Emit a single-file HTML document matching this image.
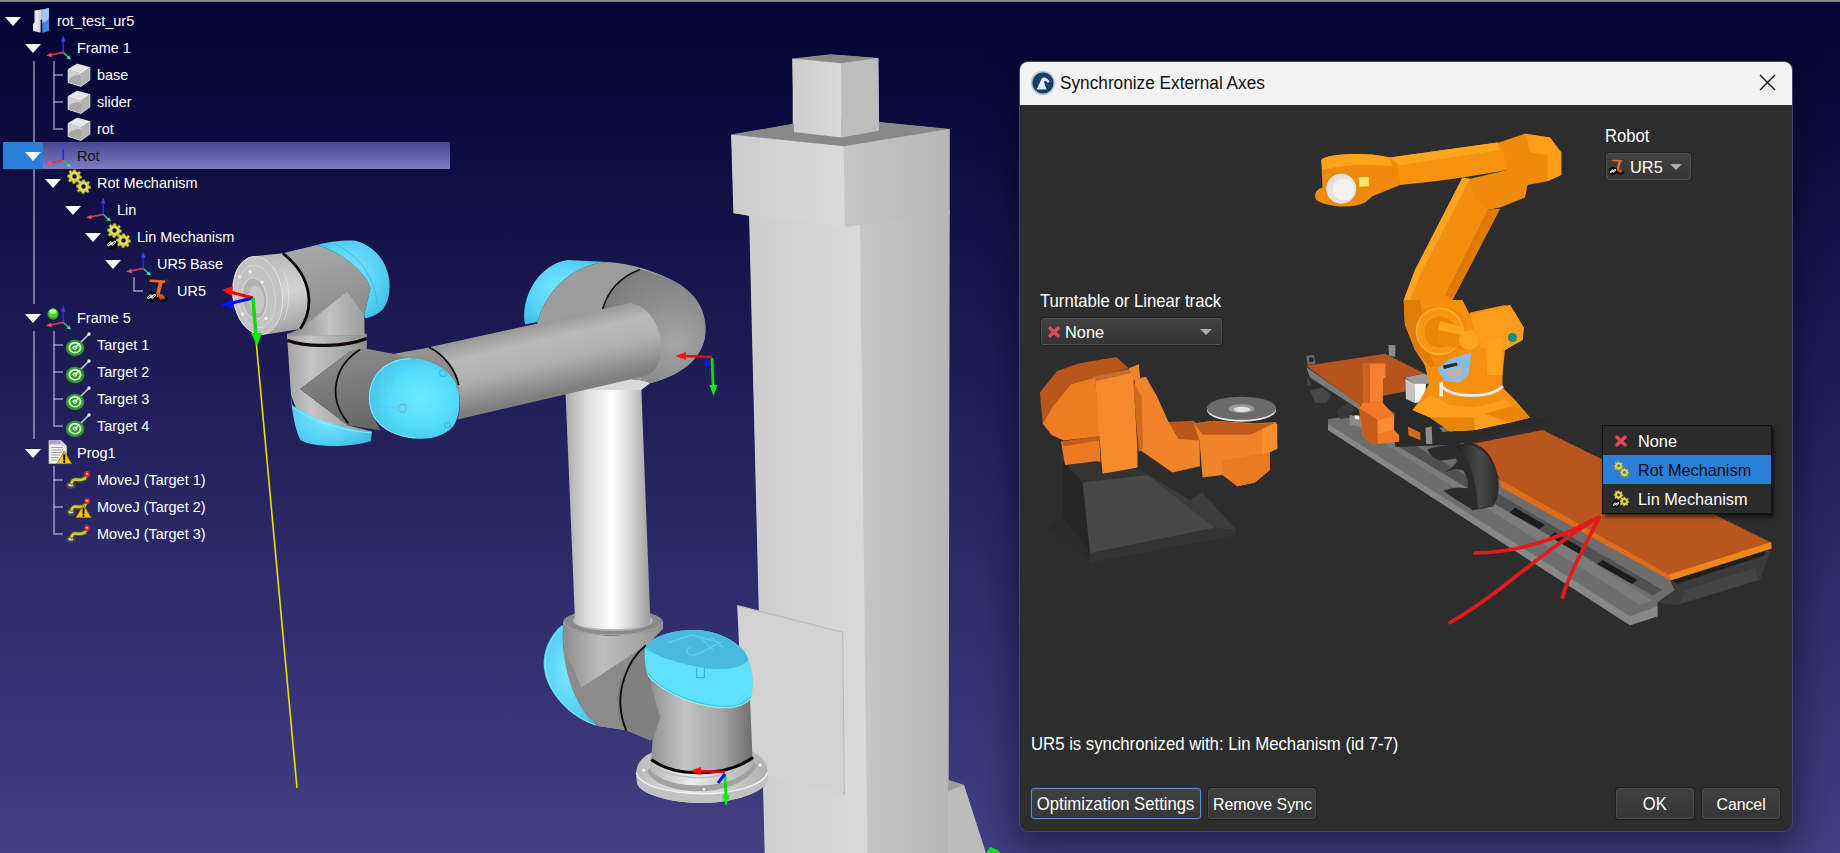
<!DOCTYPE html>
<html lang="en">
<head>
<meta charset="utf-8">
<title>Synchronize External Axes</title>
<style>
html,body{margin:0;padding:0;}
body{width:1840px;height:853px;overflow:hidden;position:relative;
  font-family:"Liberation Sans",sans-serif;
  background:linear-gradient(180deg,#020233 0px,#423f83 853px);}
#topline{position:absolute;left:0;top:0;width:1840px;height:2px;background:linear-gradient(180deg,#9a9a9a,#6a6a78);}
#scene{position:absolute;left:0;top:0;width:1840px;height:853px;}
/* tree */
#tree{position:absolute;left:0;top:0;width:460px;height:560px;color:#fff;font-size:15.4px;}
.row{position:absolute;height:27px;line-height:27px;white-space:nowrap;transform:scaleX(.94);transform-origin:0 50%;}
.t{display:inline-block;transform:scaleX(.943);transform-origin:0 50%;white-space:nowrap;}
.tc{display:inline-block;transform:scaleX(.943);transform-origin:50% 50%;white-space:nowrap;}
.row .lbl{position:absolute;top:0;text-shadow:0 0 1px rgba(255,255,255,.25);}
.tri{position:absolute;width:0;height:0;border-left:8px solid transparent;border-right:8px solid transparent;border-top:9.5px solid #fff;}
.ln{position:absolute;background:rgba(176,176,206,.62);}
#sel{position:absolute;left:3px;top:142px;width:447px;height:27px;background:linear-gradient(180deg,#47478d,#7d7dc6);}
#sel i{position:absolute;left:0;top:0;width:40px;height:27px;background:#2a80d9;}
.ico{position:absolute;}
/* dialog */
#dlgshadow{position:absolute;left:1020px;top:62px;width:772px;height:768px;border-radius:9px;box-shadow:0 14px 34px 6px rgba(0,0,20,.45);}
#dlg{position:absolute;left:1019px;top:61px;width:772px;height:769px;border:1px solid #47466c;border-radius:9px;background:#2d2d2d;overflow:hidden;color:#fff;font-size:16.8px;}
#ttl{position:absolute;left:0;top:0;width:772px;height:43px;background:#f3f3f3;color:#111;}
#ttl span{position:absolute;left:40px;top:0;line-height:42px;font-size:18px;transform:scaleX(.957);transform-origin:0 50%;white-space:nowrap;}
.abs{position:absolute;white-space:nowrap;}
.combo{position:absolute;height:27px;border:1px solid #4f4f4f;border-radius:3px;background:linear-gradient(180deg,#414141,#353535);box-shadow:0 0 0 1px #222;}
.btn{position:absolute;height:29px;line-height:31px;text-align:center;border:1px solid #4b4b4b;border-radius:3px;background:linear-gradient(180deg,#404040,#363636);box-shadow:0 0 0 1px #202020;}
#menu{position:absolute;left:1602px;top:425px;width:168px;height:87px;background:#2b2b2b;border:1px solid #111;box-shadow:2px 3px 4px rgba(0,0,0,.6);color:#fff;font-size:17.3px;}
#menu .it{position:absolute;left:0;width:168px;height:29px;line-height:31px;}
#menu .it span{position:absolute;left:35px;}
</style>
</head>
<body>
<svg id="scene" width="1840" height="853" viewBox="0 0 1840 853">
<defs>
<symbol id="i-frame" viewBox="0 0 26 26">
  <path d="M17.200 4 L17.200 17.400" stroke="#2424f0" stroke-width="1.700" fill="none"/>
  <path d="M17.200 .6 L19.300 6.600 L15.100 6.600 Z" fill="#4040ff"/>
  <path d="M17.200 17.400 L4 20" stroke="#e03646" stroke-width="1.600" fill="none"/>
  <path d="M.3 20.600 L5.400 17.800 L5.800 22.200 Z" fill="#ee5064"/>
  <path d="M17.200 17.400 L22.600 22.400" stroke="#30b080" stroke-width="1.600" fill="none"/>
  <path d="M25 24.400 L20.200 23.500 L23.300 20.200 Z" fill="#48d898"/>
</symbol>
<symbol id="i-cube" viewBox="0 0 24 24">
  <path d="M1 6.5 L10 1 L23 4.5 L23 17 L14 23.5 L1 19.5 Z" fill="#8a8a8a"/>
  <path d="M1 6.5 L10 1 L23 4.5 L14 10.5 Z" fill="#e6e6e6"/>
  <path d="M1 6.5 L14 10.5 L14 23.5 L1 19.5 Z" fill="#d0d0d0"/>
  <path d="M1 19.5 C2 14 7 11.5 14 12.5 L14 23.5 Z" fill="#a8a8a8"/>
  <path d="M14 10.5 L23 4.5 L23 17 L14 23.5 Z" fill="#b4b4b4"/>
  <path d="M1 6.5 L10 1 L23 4.5 L23 17 L14 23.5 L1 19.5 Z" fill="none" stroke="#f4f4f4" stroke-width=".8" stroke-linejoin="round" opacity=".7"/>
</symbol>
<symbol id="i-gear" viewBox="-10 -10 20 20">
  <path fill-rule="evenodd" fill="#d9d24a" stroke="#7d7712" stroke-width=".9" d="M-1.800 -9 L1.800 -9 L2.300 -6.600 L4.300 -5.800 L6.400 -7.200 L8.300 -5 L6.800 -3 L7.400 -1 L9.600 -.6 L9.600 2.400 L7.200 2.800 L6.300 4.700 L7.600 6.800 L5.200 8.600 L3.400 7 L1.400 7.500 L.8 9.800 L-2.200 9.600 L-2.600 7.200 L-4.600 6.400 L-6.600 7.800 L-8.600 5.400 L-7 3.600 L-7.600 1.600 L-9.800 1 L-9.600 -2 L-7.200 -2.500 L-6.300 -4.400 L-7.600 -6.500 L-5.200 -8.400 L-3.400 -6.800 L-2.200 -7 Z M0 -2.900 A2.900 2.900 0 1 0 0.010 -2.900 Z"/>
  <circle r="4.600" fill="none" stroke="#f0eb9a" stroke-width="1.200" opacity=".7"/>
</symbol>
<symbol id="i-gears" viewBox="0 0 26 26">
  <use href="#i-gear" x="1" y="0" width="15" height="15"/>
  <use href="#i-gear" x="10" y="10" width="15" height="15"/>
</symbol>
<symbol id="i-link" viewBox="0 0 10 10">
  <circle cx="5" cy="5" r="5" fill="#0a0a0a"/>
  <path d="M2.2 6.2 L4.2 4.2 M5.8 5.8 L7.8 3.8" stroke="#fff" stroke-width="2.4" stroke-linecap="round" fill="none"/>
  <path d="M2.2 6.2 L4.2 4.2 M5.8 5.8 L7.8 3.8" stroke="#0a0a0a" stroke-width=".8" stroke-linecap="round" fill="none"/>
  <path d="M3.8 6.2 L6.2 3.8" stroke="#fff" stroke-width=".9"/>
</symbol>
<symbol id="i-robot" viewBox="0 0 26 26">
  <ellipse cx="16" cy="22" rx="6" ry="3.200" fill="#141414"/>
  <path d="M12.500 19.500 L17.500 18.500 L19.500 21.500 L14 22.500 Z" fill="#b8501c"/>
  <path d="M3.600 2.400 L21.600 3.600 L21.800 6.200 L3.400 5 Z" fill="#e06c28"/>
  <path d="M13 4.500 L17 4.800 L13.400 18.500 L9.800 17.500 Z" fill="#e06c28"/>
  <path d="M10 16 L17 17.500 L17.500 20.500 L11 20 Z" fill="#c85a1e"/>
  <path d="M19 2 L22.500 2.400 L22.500 7 L19 6.500 Z" fill="#3a2a20"/>
</symbol>
<symbol id="i-ball" viewBox="0 0 12 12">
  <circle cx="6" cy="6" r="5.700" fill="#2f9e20"/>
  <circle cx="6" cy="5.200" r="4.600" fill="#4fd038"/>
  <ellipse cx="5.800" cy="3.600" rx="3.200" ry="2.400" fill="#c6f8b0" opacity=".9"/>
</symbol>
<symbol id="i-target" viewBox="0 0 26 26">
  <path d="M11 16 L23.5 3.5" stroke="#c8c8c8" stroke-width="1.6" stroke-linecap="round"/>
  <circle cx="24" cy="3" r="1.7" fill="#eee"/>
  <ellipse cx="10" cy="17" rx="9.3" ry="8.3" fill="#2e9a2e"/>
  <ellipse cx="10" cy="16.6" rx="6.6" ry="5.8" fill="#d6f2cc"/>
  <ellipse cx="10" cy="16.8" rx="4.6" ry="4" fill="#2e9a2e"/>
  <ellipse cx="10" cy="16.6" rx="2.5" ry="2.1" fill="#e4f8dc"/>
  <ellipse cx="10.2" cy="16.7" rx="1.1" ry="1" fill="#2e9a2e"/>
  <path d="M10.6 16.2 L14 12.8" stroke="#e8e8e8" stroke-width="1.4" stroke-linecap="round"/>
</symbol>
<symbol id="i-warn" viewBox="0 0 16 14">
  <path d="M8 .8 L15.3 13.2 L.7 13.2 Z" fill="#f6c21a" stroke="#a87a00" stroke-width=".9" stroke-linejoin="round"/>
  <path d="M8 4.4 L8 9.2" stroke="#111" stroke-width="1.9" stroke-linecap="round"/>
  <circle cx="8" cy="11.4" r="1.05" fill="#111"/>
</symbol>
<symbol id="i-prog" viewBox="0 0 26 26">
  <path d="M2 1.5 L14 1.5 L19.5 7 L19.5 24.5 L2 24.5 Z" fill="#f4f4f4" stroke="#bdbdbd" stroke-width=".8"/>
  <path d="M14 1.5 L14 7 L19.5 7 Z" fill="#d2d2d2"/>
  <rect x="2.6" y="2" width="11" height="3.4" fill="#b49ad6"/>
  <path d="M4 8.5 H16 M4 11 H16 M4 13.5 H15 M4 16 H13 M4 18.5 H11 M4 21 H10" stroke="#9a9a9a" stroke-width=".9"/>
  <use href="#i-warn" x="9" y="11.5" width="16.5" height="14"/>
</symbol>
<symbol id="i-move" viewBox="0 0 26 26">
  <ellipse cx="4.800" cy="19.300" rx="4.500" ry="3.500" fill="#4c4c4c"/>
  <ellipse cx="4.800" cy="18.900" rx="2.500" ry="1.700" fill="#d4d4d4"/>
  <path d="M5.600 16.700 C6.500 13.800 8.200 13.200 10.500 13.600 C13 14.200 15.500 14 18 12.800" stroke="#5e5a0c" stroke-width="4.200" fill="none" stroke-linecap="round"/>
  <path d="M22 10 L16.600 10.800 L19.400 15 Z" fill="#c9c32c" stroke="#5e5a0c" stroke-width=".9" stroke-linejoin="round"/>
  <path d="M5.600 16.700 C6.500 13.800 8.200 13.200 10.500 13.600 C13 14.200 15.500 14 18 12.800" stroke="#cfc930" stroke-width="2.600" fill="none" stroke-linecap="round"/>
  <circle cx="21.100" cy="8" r="2.900" fill="#d42a3c"/>
  <circle cx="20.900" cy="7.700" r="1" fill="#f6c8cc"/>
</symbol>
<symbol id="i-file" viewBox="0 0 22 27">
  <path d="M3.5 3.5 L11 2.5 L11 12 L9.5 13 L9.5 25.5 L2 24 L2 17 L3.5 15.5 Z" fill="#e8e8e8"/>
  <path d="M3.5 3.5 L11 2.5 L11 12 L9.5 13 L9.5 25.5 L7 25 L7 4 Z" fill="#cfcfcf" opacity=".6"/>
  <path d="M10.5 2.8 L18 1 L18 24 L11.2 26 L11.2 13 L10.5 12 Z" fill="#3f86e0"/>
  <path d="M10.5 2.8 L18 1 L18 11 C15 15 13 15.5 11.2 15.5 L11.2 13 L10.5 12 Z" fill="#9cc8f0"/>
</symbol>
<symbol id="i-x" viewBox="0 0 14 14">
  <path d="M3 3.200 L11 10.800 M11 3.200 L3 10.800" stroke="#e24a5c" stroke-width="3.500" stroke-linecap="round"/>
</symbol>
<linearGradient id="gFront" x1="0" y1="0" x2="1" y2="0"><stop offset="0" stop-color="#cdcdcd"/><stop offset="1" stop-color="#dadada"/></linearGradient>
<linearGradient id="gRight" x1="0" y1="0" x2="1" y2="0"><stop offset="0" stop-color="#c6c6c6"/><stop offset="1" stop-color="#b6b6b6"/></linearGradient>
<linearGradient id="gTube" x1="0" y1="0" x2="1" y2="0"><stop offset="0" stop-color="#a9a9a9"/><stop offset=".25" stop-color="#dcdcdc"/><stop offset=".55" stop-color="#ffffff"/><stop offset=".8" stop-color="#cfcfcf"/><stop offset="1" stop-color="#9c9c9c"/></linearGradient>
<linearGradient id="gFore" gradientUnits="userSpaceOnUse" x1="1200" y1="340" x2="1270" y2="640"><stop offset="0" stop-color="#8e8e8e"/><stop offset=".3" stop-color="#b9b9b9"/><stop offset=".6" stop-color="#b0b0b0"/><stop offset="1" stop-color="#7e7e7e"/></linearGradient>
<linearGradient id="gJoint" x1="0.3" y1="0" x2="0.6" y2="1"><stop offset="0" stop-color="#a0a0a0"/><stop offset=".3" stop-color="#b2b2b2"/><stop offset=".7" stop-color="#9a9a9a"/><stop offset="1" stop-color="#7e7e7e"/></linearGradient>
<linearGradient id="gJointV" x1="0" y1="0" x2="1" y2="0"><stop offset="0" stop-color="#8a8a8a"/><stop offset=".35" stop-color="#b8b8b8"/><stop offset="1" stop-color="#858585"/></linearGradient>
<linearGradient id="gFlange" x1="0.3" y1="0" x2="0.55" y2="1"><stop offset="0" stop-color="#b4b4b4"/><stop offset=".3" stop-color="#c8c8c8"/><stop offset=".55" stop-color="#d2d2d2"/><stop offset=".8" stop-color="#b8b8b8"/><stop offset="1" stop-color="#a2a2a2"/></linearGradient>
<radialGradient id="gCyan" cx=".45" cy=".45" r=".7"><stop offset="0" stop-color="#7be6ff"/><stop offset=".6" stop-color="#55d2f5"/><stop offset="1" stop-color="#3fb8e0"/></radialGradient>
<linearGradient id="gBaseV" x1="0" y1="0" x2="1" y2="0"><stop offset="0" stop-color="#8c8c8c"/><stop offset=".35" stop-color="#c4c4c4"/><stop offset=".7" stop-color="#a6a6a6"/><stop offset="1" stop-color="#6e6e6e"/></linearGradient>
<linearGradient id="gFl2" x1="0" y1="0" x2="1" y2="0"><stop offset="0" stop-color="#b8b8b8"/><stop offset=".4" stop-color="#ececec"/><stop offset="1" stop-color="#b0b0b0"/></linearGradient>
<radialGradient id="gElb" gradientUnits="userSpaceOnUse" cx="700" cy="420" r="330"><stop offset="0" stop-color="#a6a6a6"/><stop offset=".5" stop-color="#8e8e8e"/><stop offset="1" stop-color="#7c7c7c"/></radialGradient>
<linearGradient id="gW3" x1="0.35" y1="0" x2="0.6" y2="1"><stop offset="0" stop-color="#a8a8a8"/><stop offset=".4" stop-color="#9b9b9b"/><stop offset="1" stop-color="#858585"/></linearGradient>
<linearGradient id="gW3v" x1="0" y1="0" x2="1" y2="0"><stop offset="0" stop-color="#868686"/><stop offset=".55" stop-color="#c2c2c2"/><stop offset="1" stop-color="#9c9c9c"/></linearGradient>
<linearGradient id="gW2" gradientUnits="userSpaceOnUse" x1="55" y1="0" x2="700" y2="0"><stop offset="0" stop-color="#a4a4a4"/><stop offset=".3" stop-color="#c4c4c4"/><stop offset=".7" stop-color="#aaaaaa"/><stop offset="1" stop-color="#8c8c8c"/></linearGradient>
<linearGradient id="gLink" x1="0" y1="0" x2="0.3" y2="1"><stop offset="0" stop-color="#8f8f8f"/><stop offset=".5" stop-color="#7d7d7d"/><stop offset="1" stop-color="#686868"/></linearGradient>
<linearGradient id="gCollar" x1="0" y1="0" x2="0.3" y2="1"><stop offset="0" stop-color="#9a9a9a"/><stop offset="1" stop-color="#787878"/></linearGradient>
<radialGradient id="gCyan2" cx=".58" cy=".5" r=".62"><stop offset="0" stop-color="#6eeaff"/><stop offset=".55" stop-color="#55dcfb"/><stop offset="1" stop-color="#43c2ea"/></radialGradient>
<linearGradient id="gSh" gradientUnits="userSpaceOnUse" x1="220" y1="0" x2="1020" y2="0"><stop offset="0" stop-color="#8c8c8c"/><stop offset=".4" stop-color="#bebebe"/><stop offset=".75" stop-color="#a6a6a6"/><stop offset="1" stop-color="#8e8e8e"/></linearGradient>

</defs>
<!-- ===== column ===== -->
<g>
  <path d="M731.6 135 L792.7 124.3 L792.7 59 L830.9 54.7 L878 58.3 L878.6 122.3 L949.2 129.2 L948 853 L765.2 853 L749.6 216 L733.9 213 Z" fill="#cccccc"/>
  <path d="M749.1 215.8 L860.5 224.8 L867.8 853 L764.7 853 Z" fill="url(#gFront)"/>
  <path d="M860 224.8 L949.7 210 L948.5 853 L867.3 853 Z" fill="url(#gRight)"/>
  <path d="M948 780 L964 785 L986 853 L948 853 Z" fill="#bcbcbc"/>
  <path d="M948 780 L964 785 L948 791 Z" fill="#9c9c9c"/>
  <path d="M731.1 134.6 L843.7 146.2 L845 227.4 L733.4 213.2 Z" fill="url(#gFront)"/>
  <path d="M843.7 146.2 L949.7 128.9 L949.7 215 L860.5 224.8 L845 227.4 Z" fill="url(#gRight)"/>
  <path d="M731.1 134.6 L830.4 117.3 L949.7 128.9 L843.7 146.2 Z" fill="#898989"/>
  <path d="M792.2 58.6 L841.2 63.2 L841.7 137.4 L794 132 Z" fill="url(#gFront)"/>
  <path d="M841.2 63.2 L878.5 58 L879.1 130.7 L841.7 137.4 Z" fill="#bdbdbd"/>
  <path d="M792.2 58.6 L830.9 54.2 L878.5 58 L841.2 63.2 Z" fill="#8a8a8a"/>
  <!-- panel -->
  <path d="M737.2 605.7 L842.7 632.2 L844.4 794.7 L745 770 Z" fill="#d2d2d2"/>
  <path d="M737.2 605.7 L842.7 632.2 L844.4 794.7" fill="none" stroke="#bcbcbc" stroke-width="1.2"/>
  <path d="M986 853 L990 847 L998 850 L1000 853 Z" fill="#19e019"/>
</g>
<!-- yellow line -->
<path d="M256 340 L297 788" stroke="#e8e000" stroke-width="1.6" fill="none"/>

<!-- ===== shoulder / base (group C) ===== -->
<g transform="translate(500,600) scale(.25)">
  <!-- base flange -->
  <path d="M545 690 C545 650 580 620 605 612 L1010 608 C1050 622 1072 660 1070 690 L1070 722 C1050 782 900 812 810 812 C700 812 560 782 548 732 Z" fill="url(#gFl2)"/>
  <path d="M545 690 C560 750 700 775 810 775 C920 775 1055 745 1070 690 L1070 722 C1050 782 900 812 810 812 C700 812 560 782 548 732 Z" fill="#c2c2c2"/>
  <path d="M545 690 C560 750 700 775 810 775 C920 775 1055 745 1070 690" fill="none" stroke="#f4f4f4" stroke-width="5"/>
  <path d="M588 688 C650 795 965 795 1028 662 L1015 648 C960 770 650 765 600 672 Z" fill="#a2a2a2"/>
  <path d="M600 636 C640 730 960 735 1015 612 L1015 650 C960 770 650 765 600 675 Z" fill="url(#gFl2)"/>
  <path d="M600 640 C645 735 960 740 1015 616" fill="none" stroke="#bdbdbd" stroke-width="5"/>
  <circle cx="575" cy="680" r="6" fill="#f4f4f4"/><circle cx="1040" cy="660" r="6" fill="#f4f4f4"/><circle cx="815" cy="757" r="5" fill="#f4f4f4"/>
</g>
<g transform="translate(535,610) scale(.1254)">
  <!-- shoulder upper body -->
  <path d="M225 95 C225 95 350 203 620 203 C890 203 1020 90 1020 90 L1022 150 L900 275 L700 500 L655 700 L672 880 L718 957 L518 927 C300 800 200 400 225 95 Z" fill="url(#gSh)"/>
  <path d="M225 300 L370 620 L900 272 L700 500 L655 700 L672 880 L718 957 L518 927 C320 800 210 520 225 300 Z" fill="#8a8a8a"/>
  <path d="M215 120 C120 200 60 330 70 450 C80 620 250 860 518 930 C300 800 200 400 225 130 Z" fill="url(#gCyan)"/>
  <path d="M205 140 C110 230 70 350 85 470 C100 620 240 830 480 915" fill="none" stroke="#8aefff" stroke-width="7"/>
  <!-- dark link -->
  <path d="M900 272 L700 500 L655 700 L672 880 L718 957 L917 1041 L940 1030 L997 857 L960 700 L900 520 L880 300 Z" fill="#808080"/>
  <path d="M885 282 C760 380 600 650 728 962" fill="none" stroke="#0a0a0a" stroke-width="15"/>
</g>
<g transform="translate(500,600) scale(.25)">
  <!-- base body -->
  <path d="M590 290 L640 470 L610 560 L605 640 C700 705 900 705 1010 632 L1000 395 C900 440 700 400 590 290 Z" fill="url(#gBaseV)"/>
  <path d="M605 638 C700 710 900 710 1012 630" fill="none" stroke="#050505" stroke-width="12"/>
</g>
<g transform="translate(535,610) scale(.1254)">
  <!-- cyan top cap -->
  <path d="M880 300 C900 225 1100 150 1300 160 C1500 175 1680 290 1702 400 C1745 500 1745 600 1722 705 C1650 790 1500 795 1300 745 C1100 685 950 595 900 525 C878 450 868 350 880 300 Z" fill="#5fe0fc"/>
  <path d="M880 300 C900 225 1100 150 1300 160 C1500 175 1680 290 1702 400 C1640 470 1480 490 1300 455 C1100 415 950 365 880 300 Z" fill="#48badf"/>
  <path d="M900 500 C960 590 1100 680 1300 738 C1500 788 1650 782 1722 690" fill="none" stroke="#3fc0e6" stroke-width="8"/>
  <path d="M902 525 C960 600 1100 688 1300 748 C1500 798 1650 792 1722 705" fill="none" stroke="#9af4ff" stroke-width="7"/>
  <path d="M1290 460 L1290 540 L1350 540 L1350 460" fill="none" stroke="#3aa6cc" stroke-width="8"/>
  <path d="M1060 260 L1250 200 L1480 260 L1300 350 C1220 380 1180 330 1240 290 M1330 230 L1420 320 M1400 215 L1500 300" fill="none" stroke="#66cdea" stroke-width="9"/>
  <!-- collar -->
  <ellipse cx="622" cy="96" rx="398" ry="106" fill="#8a8a8a"/>
  <path d="M225 100 C300 230 950 230 1020 95" fill="none" stroke="#a4a4a4" stroke-width="8"/>
  <ellipse cx="620" cy="84" rx="318" ry="84" fill="#b6b6b6"/>
</g>
<!-- upper arm tube -->
<path d="M565 380 L641 380 L650.4 622 A37.6 7 0 0 1 575.1 622 Z" fill="url(#gTube)"/>
<!-- ===== elbow (group B) ===== -->
<g transform="translate(500,237) scale(.25)">
  <path d="M260 590 C300 560 560 555 600 585 L565 612 L262 612 Z" fill="#d9d9d9"/>
  <path d="M100 350 C80 250 150 110 270 92 L430 100 C300 110 190 200 150 340 Z" fill="url(#gCyan)"/>
  <path d="M150 340 C190 200 300 110 430 100 C520 105 640 140 720 190 C790 240 832 320 820 400 C805 480 740 548 600 585 C560 555 300 560 260 590 L150 600 Z" fill="#9d9d9d"/>
  <path d="M560 130 C640 150 700 175 740 205 C800 250 832 320 820 400 C805 480 740 548 600 585 L560 560 C640 500 660 380 600 310 C560 280 540 270 520 265 L410 290 C430 220 480 160 560 130 Z" fill="url(#gElb)"/>
  <path d="M560 130 C480 160 430 220 410 290" fill="none" stroke="#0a0a0a" stroke-width="6"/>
</g>
<!-- ===== forearm tube (group A coords) ===== -->
<g transform="translate(220,237) scale(.25)">
  <path d="M840 440 L1640 265 C1700 270 1760 340 1765 430 C1768 500 1740 545 1700 556 L950 730 C980 640 940 500 840 440 Z" fill="url(#gFore)"/>
</g>
<!-- ===== wrist 1 / wrist 2 (group L) ===== -->
<g transform="translate(280,335) scale(.1254)">
  <!-- wrist1 collar -->
  <path d="M880 155 L1190 100 C1330 180 1440 330 1430 520 L1380 730 L1000 500 Z" fill="url(#gCollar)"/>
  <path d="M1190 100 C1300 150 1400 270 1425 400" fill="none" stroke="#0a0a0a" stroke-width="14"/>
  <!-- wrist2 vertical cylinder -->
  <path d="M55 -10 L692 -10 L692 112 L560 130 L160 430 L540 720 L735 770 L700 800 L150 640 L88 480 Z" fill="url(#gW2)"/>
  <path d="M58 42 C200 100 520 98 692 28" fill="none" stroke="#140808" stroke-width="26"/>
  <!-- bottom cyan cap -->
  <path d="M85 480 C95 600 120 760 165 840 C260 900 560 900 725 845 L732 770 C600 760 300 700 100 560 Z" fill="url(#gCyan)"/>
  <path d="M100 575 C300 715 560 770 730 780" fill="none" stroke="#8af0ff" stroke-width="7"/>
  <!-- dark horizontal link -->
  <path d="M160 430 L560 130 L690 110 L900 150 L1040 185 L760 330 L740 640 L800 760 L540 720 Z" fill="url(#gLink)"/>
  <path d="M640 115 C450 230 360 480 545 705" fill="none" stroke="#0a0a0a" stroke-width="14"/>
  <!-- wrist1 cyan cap -->
  <path d="M1040 185 C1180 190 1330 250 1400 380 C1450 500 1440 640 1380 730 C1320 800 1200 840 1080 825 C950 815 800 760 740 640 C690 540 700 400 770 310 C830 230 930 185 1040 185 Z" fill="url(#gCyan2)"/>
  <path d="M1040 190 C930 190 830 235 772 315 C705 400 695 540 745 640 C800 755 950 812 1080 822" fill="none" stroke="#7feeff" stroke-width="8"/>
  <path d="M810 325 L905 360 L865 485 L740 455 M740 560 L930 585" fill="none" stroke="#86b8c8" stroke-width="5"/>
  <circle cx="975" cy="585" r="32" fill="none" stroke="#7fb0c0" stroke-width="9"/>
  <circle cx="1300" cy="305" r="26" fill="none" stroke="#3fb2d4" stroke-width="8"/>
  <circle cx="1335" cy="720" r="22" fill="none" stroke="#3fb2d4" stroke-width="8"/>
</g>
<!-- ===== wrist 3 (group K) ===== -->
<g transform="translate(225,235) scale(.1254)">
  <path d="M460 145 L735 80 C900 130 1100 260 1160 420 L1110 640 L1110 800 L495 800 L500 790 L600 750 C700 600 720 350 460 145 Z" fill="url(#gW3)"/>
  <path d="M975 450 L1110 640 L1112 800 L495 800 L500 790 L600 750 Z" fill="url(#gW3v)"/>
  <path d="M735 80 C800 55 950 40 1040 45 C1180 80 1290 200 1310 360 C1320 480 1290 540 1280 560 C1250 620 1180 650 1120 665 L1110 640 L1160 420 C1100 260 900 130 735 80 Z" fill="url(#gCyan)"/>
  <path d="M880 75 C1050 150 1200 330 1215 560" fill="none" stroke="#38b0d8" stroke-width="6"/>
  <!-- flange -->
  <path d="M215 172 L460 145 C720 350 700 600 600 750 L300 797 C150 760 40 560 62 420 C80 290 140 200 215 172 Z" fill="url(#gFlange)"/>
  <path d="M460 145 C720 350 700 600 600 750" fill="none" stroke="#0a0606" stroke-width="22"/>
  <ellipse cx="255" cy="482" rx="196" ry="312" transform="rotate(-7 255 482)" fill="#c3c3c3"/>
  <ellipse cx="262" cy="482" rx="196" ry="312" transform="rotate(-7 262 482)" fill="none" stroke="#e6e6e6" stroke-width="7"/>
  <ellipse cx="250" cy="490" rx="150" ry="250" transform="rotate(-7 250 490)" fill="none" stroke="#dadada" stroke-width="6"/>
  <ellipse cx="235" cy="505" rx="98" ry="165" transform="rotate(-7 235 505)" fill="#b2b2b2" stroke="#e2e2e2" stroke-width="7"/>
  <ellipse cx="250" cy="515" rx="62" ry="112" transform="rotate(-7 250 515)" fill="#c6c6c6"/>
  <g fill="#f0f0f0"><circle cx="115" cy="332" r="13"/><circle cx="200" cy="292" r="13"/><circle cx="296" cy="375" r="13"/><circle cx="140" cy="630" r="13"/><circle cx="326" cy="665" r="13"/></g>
  <path d="M470 300 C520 400 520 560 470 680" fill="none" stroke="#e8e8e8" stroke-width="6"/>
</g>
<!-- axis triads -->
<g stroke-width="1.6" fill="none">
  <path d="M253 298 L226 291" stroke="#f00000" stroke-width="3"/><path d="M222 290 L233 286 L232 296 Z" fill="#ff1010"/>
  <path d="M253 298 L232 303" stroke="#0000f0" stroke-width="3"/><path d="M221 305 L233 299 L234 309 Z" fill="#1010ff"/>
  <path d="M253 298 L256 336" stroke="#00e000" stroke-width="3.4"/><path d="M257 346 L251 333 L262 333 Z" fill="#10ee10"/>
  <path d="M712 357 L684 356" stroke="#f00000" stroke-width="2.6"/><path d="M675 356 L686 352 L686 360 Z" fill="#ff1010"/>
  <path d="M712 358 L713 386" stroke="#00e000" stroke-width="2.8"/><path d="M713.500 396 L709.500 385 L717.500 385 Z" fill="#10ee10"/>
  <circle cx="707" cy="363" r="3" fill="#1010e0"/>
  <path d="M725 772 L700 771" stroke="#f00000" stroke-width="2.6"/><path d="M690 771 L701 767 L701 775 Z" fill="#ff1010"/>
  <path d="M725 775 L726 797" stroke="#00e000" stroke-width="2.8"/><path d="M726 806 L722 795 L730 795 Z" fill="#10ee10"/>
  <path d="M725 774 L718 783" stroke="#1010f0" stroke-width="3"/>
</g>

</svg>
<div id="topline"></div>
<div id="tree">
<div id="sel"><i></i></div>
<div class="ln" style="left:32.5px;top:61px;width:2px;height:81px"></div>
<div class="ln" style="left:32.5px;top:169px;width:2px;height:135px"></div>
<div class="ln" style="left:32.5px;top:331px;width:2px;height:108px"></div>
<div class="ln" style="left:52.5px;top:61px;width:2px;height:67px"></div>
<div class="ln" style="left:53px;top:73.5px;width:10px;height:2px"></div>
<div class="ln" style="left:53px;top:100.5px;width:10px;height:2px"></div>
<div class="ln" style="left:53px;top:127.5px;width:10px;height:2px"></div>
<div class="ln" style="left:132.5px;top:277px;width:2px;height:14px"></div>
<div class="ln" style="left:133px;top:289.5px;width:10px;height:2px"></div>
<div class="ln" style="left:52.5px;top:331px;width:2px;height:94px"></div>
<div class="ln" style="left:53px;top:343.5px;width:10px;height:2px"></div>
<div class="ln" style="left:53px;top:370.5px;width:10px;height:2px"></div>
<div class="ln" style="left:53px;top:397.5px;width:10px;height:2px"></div>
<div class="ln" style="left:53px;top:424.5px;width:10px;height:2px"></div>
<div class="ln" style="left:52.5px;top:466px;width:2px;height:67px"></div>
<div class="ln" style="left:53px;top:478.5px;width:10px;height:2px"></div>
<div class="ln" style="left:53px;top:505.5px;width:10px;height:2px"></div>
<div class="ln" style="left:53px;top:532.5px;width:10px;height:2px"></div>
<div class="tri" style="left:5px;top:17px"></div>
<svg class="ico" style="left:31px;top:7px" width="22" height="27"><use href="#i-file" width="22" height="27"/></svg>
<div class="row" style="left:57px;top:7.4px;">rot_test_ur5</div>
<div class="tri" style="left:25px;top:44px"></div>
<svg class="ico" style="left:46px;top:35px" width="26" height="26"><use href="#i-frame" width="26" height="26"/></svg>
<div class="row" style="left:77px;top:34.4px;">Frame 1</div>
<svg class="ico" style="left:66.5px;top:62.5px" width="24" height="24"><use href="#i-cube" width="24" height="24"/></svg>
<div class="row" style="left:97px;top:61.4px;">base</div>
<svg class="ico" style="left:66.5px;top:89.5px" width="24" height="24"><use href="#i-cube" width="24" height="24"/></svg>
<div class="row" style="left:97px;top:88.4px;">slider</div>
<svg class="ico" style="left:66.5px;top:116.5px" width="24" height="24"><use href="#i-cube" width="24" height="24"/></svg>
<div class="row" style="left:97px;top:115.4px;">rot</div>
<div class="tri" style="left:25px;top:152px"></div>
<svg class="ico" style="left:46px;top:143px" width="26" height="26"><use href="#i-frame" width="26" height="26"/></svg>
<div class="row" style="left:77px;top:142.4px;color:#111;text-shadow:none;">Rot</div>
<div class="tri" style="left:45px;top:179px"></div>
<svg class="ico" style="left:66px;top:169px" width="26" height="26"><use href="#i-gears" width="26" height="26"/></svg>
<div class="row" style="left:97px;top:169.4px;">Rot Mechanism</div>
<div class="tri" style="left:65px;top:206px"></div>
<svg class="ico" style="left:86px;top:197px" width="26" height="26"><use href="#i-frame" width="26" height="26"/></svg>
<div class="row" style="left:117px;top:196.4px;">Lin</div>
<div class="tri" style="left:85px;top:233px"></div>
<svg class="ico" style="left:106px;top:223px" width="26" height="26"><use href="#i-gears" width="26" height="26"/></svg><svg class="ico" style="left:106px;top:238px" width="11" height="11"><use href="#i-link" width="11" height="11"/></svg>
<div class="row" style="left:137px;top:223.4px;">Lin Mechanism</div>
<div class="tri" style="left:105px;top:260px"></div>
<svg class="ico" style="left:126px;top:251px" width="26" height="26"><use href="#i-frame" width="26" height="26"/></svg>
<div class="row" style="left:157px;top:250.4px;">UR5 Base</div>
<svg class="ico" style="left:146px;top:277px" width="26" height="26"><use href="#i-robot" width="26" height="26"/></svg><svg class="ico" style="left:146px;top:291px" width="11" height="11"><use href="#i-link" width="11" height="11"/></svg>
<div class="row" style="left:177px;top:277.4px;">UR5</div>
<div class="tri" style="left:25px;top:314px"></div>
<svg class="ico" style="left:46px;top:305px" width="26" height="26"><use href="#i-frame" width="26" height="26"/></svg><svg class="ico" style="left:47px;top:308px" width="12" height="12"><use href="#i-ball" width="12" height="12"/></svg>
<div class="row" style="left:77px;top:304.4px;">Frame 5</div>
<svg class="ico" style="left:65px;top:331px" width="26" height="26"><use href="#i-target" width="26" height="26"/></svg>
<div class="row" style="left:97px;top:331.4px;">Target 1</div>
<svg class="ico" style="left:65px;top:358px" width="26" height="26"><use href="#i-target" width="26" height="26"/></svg>
<div class="row" style="left:97px;top:358.4px;">Target 2</div>
<svg class="ico" style="left:65px;top:385px" width="26" height="26"><use href="#i-target" width="26" height="26"/></svg>
<div class="row" style="left:97px;top:385.4px;">Target 3</div>
<svg class="ico" style="left:65px;top:412px" width="26" height="26"><use href="#i-target" width="26" height="26"/></svg>
<div class="row" style="left:97px;top:412.4px;">Target 4</div>
<div class="tri" style="left:25px;top:449px"></div>
<svg class="ico" style="left:47px;top:439px" width="26" height="26"><use href="#i-prog" width="26" height="26"/></svg>
<div class="row" style="left:77px;top:439.4px;">Prog1</div>
<svg class="ico" style="left:66px;top:466px" width="26" height="26"><use href="#i-move" width="26" height="26"/></svg>
<div class="row" style="left:97px;top:466.4px;">MoveJ (Target 1)</div>
<svg class="ico" style="left:66px;top:493px" width="26" height="26"><use href="#i-move" width="26" height="26"/></svg><svg class="ico" style="left:75px;top:504px" width="17" height="14.5"><use href="#i-warn" width="17" height="14.5"/></svg>
<div class="row" style="left:97px;top:493.4px;">MoveJ (Target 2)</div>
<svg class="ico" style="left:66px;top:520px" width="26" height="26"><use href="#i-move" width="26" height="26"/></svg>
<div class="row" style="left:97px;top:520.4px;">MoveJ (Target 3)</div>
</div>
<div id="dlgshadow"></div>
<div id="dlg">
<div id="ttl"><span>Synchronize External Axes</span></div>
<svg class="abs" style="left:0;top:0" width="772" height="768" viewBox="1020 62 772 768">
<defs>
<linearGradient id="gor" x1="0" y1="0" x2="1" y2="0"><stop offset="0" stop-color="#ffa01a"/><stop offset="1" stop-color="#e8820a"/></linearGradient>
<linearGradient id="gchain" x1="0" y1="0" x2="1" y2="0"><stop offset="0" stop-color="#1c1c1c"/><stop offset=".6" stop-color="#4a4a4a"/><stop offset="1" stop-color="#2a2a2a"/></linearGradient>
</defs>
<!-- title icon -->
<circle cx="1043" cy="83" r="12.2" fill="#b9c6d6"/>
<circle cx="1043" cy="83" r="10.6" fill="#12406a"/>
<path d="M1036.5 89.5 L1041.5 79 C1043 76.5 1047 77 1049.5 81.5 L1047.8 83 C1046 80.5 1044.5 80.5 1044 82 L1046.5 89.5 Z" fill="#e9eef4"/>
<!-- close X -->
<path d="M1760 75 L1775 90 M1775 75 L1760 90" stroke="#111" stroke-width="1.4" fill="none"/>

<!-- ===== turntable (group H) ===== -->
<g transform="translate(1030,350) scale(.25)">
  <path d="M125 430 L265 445 L290 495 L430 470 L640 600 L690 570 L825 720 L820 742 L235 852 L70 700 L130 670 Z" fill="#333333"/>
  <path d="M210 530 L470 500 L740 710 L240 812 Z" fill="#474747"/>
  <path d="M130 440 L210 530 L240 812 L130 670 Z" fill="#262626"/>
  <path d="M470 500 L640 600 L690 570 L825 720 L740 710 Z" fill="#3c3c3c"/>
  <path d="M70 700 L130 670 L240 812 L235 852 Z" fill="#2a2a2a"/>
</g>
<g transform="translate(1030,350) scale(.1413)">
  <path d="M740 210 L820 190 L900 330 L980 510 L1100 510 L1200 640 L1203 823 L1008 867 L778 708 Z" fill="#f08428"/>
  <path d="M980 510 L1160 500 L1250 600 L1200 640 L1050 630 Z" fill="#b9571b"/>
  <path d="M1160 520 L1300 500 L1600 520 L1740 510 L1751 690 L1698 725 L1698 849 L1592 938 L1468 964 L1362 884 L1221 902 L1200 640 Z" fill="#f08428"/>
  <path d="M1362 780 L1698 725 L1698 849 L1592 938 L1468 964 L1362 884 Z" fill="#e87a20"/>
  <path d="M1160 520 L1300 500 L1600 525 L1740 512 L1560 600 L1220 600 Z" fill="#c25c1c"/>
  <path d="M1640 560 L1750 520 L1750 700 L1700 720 L1645 740 Z" fill="#fa8e30"/>
  <path d="M70 300 L190 150 L340 95 L610 50 L700 130 L460 195 L290 240 L160 400 L90 520 Z" fill="#b9571b"/>
  <path d="M160 400 L290 240 L460 195 L500 610 L240 640 L150 600 L90 520 Z" fill="#ee7d22"/>
  <path d="M220 650 L490 610 L500 790 L469 787 L248 814 Z" fill="#ec7a22"/>
  <path d="M220 650 L490 610 L488 640 L245 682 Z" fill="#c25c1c"/>
  <path d="M460 195 L700 140 L730 160 L760 700 L761 831 L513 876 L490 600 Z" fill="#f58a2c"/>
  <path d="M450 190 L700 135 L730 160 L470 220 Z" fill="#c96a30"/>
  <path d="M700 130 L770 100 L780 200 L735 215 Z" fill="#f08428"/>
  <path d="M730 220 L790 330 L800 700 L770 720 L750 500 Z" fill="#d06a1e"/>
  <ellipse cx="1497" cy="425" rx="245" ry="82" fill="#e6e6e6"/>
  <ellipse cx="1497" cy="412" rx="245" ry="82" fill="#6a6a6a"/>
  <ellipse cx="1497" cy="415" rx="92" ry="31" fill="#9a9a9a"/>
  <ellipse cx="1500" cy="420" rx="58" ry="18" fill="#e2e2e2"/>
</g>

<!-- ===== linear track: rail band (group G coords) ===== -->
<g transform="translate(1330,430) scale(.25)">
  <path d="M-8 -44 L130 -60 L520 40 L680 200 L1360 600 L1380 640 L1310 690 L1310 745 L1200 781 L-8 0 Z" fill="#6d6d6d"/>
  <path d="M-8 -24 L1200 745 L1310 705 L1310 745 L1200 781 L-8 0 Z" fill="#878787"/>
  <path d="M100 -20 L1240 700 L1290 682 L170 -30 Z" fill="#7b7b7b"/>
  <path d="M300 40 L620 225 L1330 640 L1290 662 L600 262 L280 70 Z" fill="#505050"/>
  <path d="M740 310 L860 380 L838 396 L718 330 Z M900 410 L1020 480 L998 496 L878 426 Z M1090 520 L1230 600 L1208 616 L1068 536 Z" fill="#1c1c1c"/>
  <path d="M1360 600 L1765 475 L1720 600 L1390 700 L1310 690 L1380 640 Z" fill="#3b3b3b"/>
  <path d="M1362 602 L1740 484 L1738 502 L1392 614 Z" fill="#1f1f1f"/>
  <path d="M1420 640 L1700 552 L1712 600 L1400 695 Z" fill="#444"/>
</g>
<!-- ===== track upper-left (group I) ===== -->
<g transform="translate(1295,340) scale(.1254)">
  <path d="M90 125 L150 120 L165 190 L100 200 Z" fill="#6a6a6a"/>
  <circle cx="130" cy="158" r="20" fill="#2a2a2a"/>
  <path d="M745 40 L800 42 L800 135 L750 125 Z" fill="#8c8c8c"/>
  <path d="M90 215 L120 300 L520 560 L520 515 Z" fill="#7a7a7a"/>
  <path d="M95 290 L130 350 L100 370 Z M120 400 L220 380 L290 440 L250 500 L160 500 Z" fill="#474747"/>
  <path d="M330 560 L420 500 L470 540 L440 620 L360 630 Z" fill="#3a3a3a"/>
  <path d="M435 600 L540 610 L545 690 L440 680 Z" fill="#8a8a8a"/>
  <path d="M475 600 L510 605 L512 635 L480 628 Z" fill="#f2f2f2"/>
  <!-- carriage -->
  <path d="M580 540 L700 440 L880 410 L940 500 L1080 600 L1240 720 L1994 622 L2002 650 L1280 835 L800 853 L780 640 Z" fill="#2a2a2a"/>
  <path d="M580 540 L760 560 L800 585 L790 625 L640 612 Z" fill="#585858"/>
  <path d="M900 690 L1000 740 L1000 800 L905 760 Z" fill="#d86a20"/>
  <path d="M1040 700 L1090 690 L1095 830 L1045 830 Z" fill="#8a8a8a"/>
  <path d="M1150 700 L1240 690 L1270 720 L1180 735 Z" fill="#777"/>
  <!-- plate -->
  <path d="M90 205 L720 110 L1030 265 L875 300 L880 410 L700 445 L700 500 L520 520 Z" fill="#b5541c"/>
  <!-- pillar -->
  <path d="M540 190 L720 185 L720 300 L700 310 L700 500 L790 600 L790 720 L830 760 L830 810 L620 832 L540 770 L510 540 L545 500 Z" fill="#f07a2a"/>
  <path d="M540 190 L600 188 L600 500 L545 500 Z" fill="#cf621e"/>
  <path d="M510 540 L660 640 L660 830 L620 832 L540 770 Z" fill="#c65c1c"/>
  <path d="M600 200 L720 195 L720 300 L700 310 L700 480 L600 495 Z" fill="#f58232"/>
  <path d="M660 640 L790 610 L790 720 L660 745 Z" fill="#fa8a36"/>
  <path d="M660 745 L790 720 L830 760 L830 810 L660 830 Z" fill="#f07826"/>
  <!-- white box -->
  <path d="M875 300 L1030 268 L1150 330 L1040 352 L950 347 Z" fill="#9c9c9c"/>
  <path d="M878 308 L950 347 L955 502 L885 470 Z" fill="#c4c4c4"/>
  <path d="M950 347 L1045 350 L1035 490 L955 502 Z" fill="#f6f6f6"/>
</g>
<!-- ===== right orange cover (group G coords) ===== -->
<g transform="translate(1330,430) scale(.25)">
  <path d="M470 75 L850 0 L1765 450 L1355 580 L680 200 C640 100 560 60 470 75 Z" fill="#b8561d"/>
  <path d="M680 198 L1355 578 L1362 602 L682 228 Z" fill="#de6d1b"/>
  <path d="M1355 578 L1765 448 L1767 474 L1362 602 Z" fill="#ee861c"/>
</g>
<!-- ===== cable chain (group J) ===== -->
<g transform="translate(1330,420) scale(.1254)">
  <path d="M780 235 C820 205 1000 195 1100 185 C1200 180 1280 260 1320 380 C1360 520 1350 620 1300 690 L1140 720 C1100 690 1000 640 905 565 C960 545 1010 535 1040 540 L1100 545 C1110 500 1090 440 1060 400 L1000 390 L915 415 C960 390 1040 330 1000 310 L880 325 C820 300 780 260 780 235 Z" fill="#2b2b2b"/>
  <path d="M1060 200 C1180 190 1270 270 1310 390 C1345 520 1340 610 1295 685 L1180 705 C1170 600 1160 480 1120 380 C1090 300 1060 250 1000 215 Z" fill="url(#gchain)"/>
</g>
<!-- ===== big robot upper (group E) ===== -->
<g transform="translate(1290,110) scale(.25)">
  <path d="M690 270 L740 280 L790 400 L840 395 L650 760 L700 800 L690 852 L460 852 L455 760 L500 640 Z" fill="#f38e0e"/>
  <path d="M690 270 L720 275 L520 660 L470 790 L455 760 L500 640 Z" fill="#ffa41e"/>
  <path d="M790 400 L840 395 L650 760 L620 740 Z" fill="#de7a06"/>
  <path d="M700 852 L720 810 L860 780 L900 810 L920 852 Z" fill="#f5900f"/>
  <path d="M820 135 L940 95 L1040 110 L1085 170 L1085 260 L1030 285 L950 300 L940 350 L840 390 L790 400 L740 350 L720 275 L870 240 Z" fill="#f08a0c"/>
  <path d="M940 95 L1040 110 L1085 170 L1085 260 L1030 285 L1030 180 L960 170 Z" fill="#ff9d18"/>
  <path d="M400 190 L830 130 L850 150 L870 240 L690 270 L580 285 L440 300 Z" fill="#f7920f"/>
  <path d="M400 190 L830 130 L840 160 L410 225 Z" fill="#ffa520"/>
  <path d="M125 200 C140 175 300 165 400 190 L430 215 L440 300 L330 345 L300 370 C250 395 150 390 105 360 C95 340 100 320 130 310 Z" fill="#f08a0c"/>
  <path d="M125 200 C140 175 300 165 400 190 L410 225 C300 215 200 220 130 240 Z" fill="#ffa31c"/>
  <path d="M275 270 L315 268 L315 305 L277 307 Z" fill="#f4e96a"/>
  <circle cx="205" cy="315" r="60" fill="#e2e2e2"/>
  <circle cx="215" cy="318" r="44" fill="#f2f2f2"/>
</g>

<!-- ===== robot base (group F) ===== -->
<g transform="translate(1290,300) scale(.25)">
  <path d="M455 0 L690 0 L720 60 L760 50 L880 20 L935 110 L930 160 L860 200 L850 300 L830 330 L900 400 L960 470 L880 490 L740 520 L640 525 L560 470 L490 440 L520 400 L556 335 L540 262 L500 200 L460 100 Z" fill="#f5900f"/>
  <path d="M455 0 L520 0 L540 120 L600 260 L560 270 L500 200 L460 100 Z" fill="#e07c08"/>
  <path d="M530 40 C560 20 640 20 690 60 C720 120 700 200 640 235 L590 275 C540 200 520 120 530 40 Z" fill="#f08a0c"/>
  <circle cx="598" cy="125" r="92" fill="#f7960f"/>
  <circle cx="598" cy="125" r="92" fill="none" stroke="#ffb030" stroke-width="7"/>
  <circle cx="600" cy="128" r="62" fill="#e98508"/>
  <path d="M600 85 L700 110 L745 150 L730 195 L690 200 L590 170 Z" fill="#ee8a0a"/>
  <path d="M600 85 L700 110 L690 140 L590 120 Z" fill="#ffa41c"/>
  <circle cx="716" cy="160" r="40" fill="#ffa620"/>
  <path d="M720 60 L880 20 L935 110 L930 160 L860 200 L760 190 Z" fill="#ff9c1a"/>
  <path d="M490 440 L560 380 L640 420 L740 430 L860 400 L960 470 L880 490 L740 520 L640 525 L560 470 Z" fill="#ffa01c"/>
  <path d="M560 470 L640 525 L740 520 L735 470 L650 470 Z M780 455 L880 490 L960 470 L900 420 Z" fill="#e88408"/>
  <path d="M600 350 C640 390 800 395 850 350 L850 300 L620 300 Z" fill="#f5900f"/>
  <path d="M606 345 C650 392 800 396 852 345" fill="none" stroke="#ececec" stroke-width="11"/>
  <path d="M590 275 L640 235 L725 210 L715 300 L680 330 L620 325 Z" fill="#8db9e2"/>
  <path d="M630 280 L690 265 L690 310 L640 318 Z" fill="#b4b4b4"/>
  <path d="M612 262 L668 250 L670 262 L616 276 Z" fill="#2a2a2a"/>
  <circle cx="890" cy="150" r="18" fill="#0a8c8c"/>
  <path d="M780 160 L850 150 L850 300 L790 300 Z" fill="#ffa21e"/>
  <path d="M598 330 L612 328 L612 385 L598 385 Z" fill="#f0f0f0"/>
</g>

<!-- red arrow (group G coords) -->
<g transform="translate(1330,430) scale(.25)" fill="none" stroke="#e31b1b" stroke-width="15" stroke-linecap="round" stroke-linejoin="round">
  <path d="M580 492 C750 490 900 440 1075 350"/>
  <path d="M480 770 C650 680 850 480 1075 350"/>
  <path d="M1075 350 C1030 450 960 560 930 668"/>
</g>
</svg>

<div class="abs t" style="left:585px;top:64px;line-height:20px;font-size:17.6px;">Robot</div>
<div class="combo" style="left:586px;top:91px;width:83px;height:25px;">
  <svg class="abs" style="left:3px;top:4px" width="17" height="17"><use href="#i-robot" width="17" height="17"/></svg>
  <svg class="abs" style="left:2px;top:13px" width="8" height="8"><use href="#i-link" width="8" height="8"/></svg>
  <span class="abs t" style="left:23px;top:0;line-height:26px;font-size:17.4px">UR5</span>
  <i class="abs" style="left:63px;top:10px;border-left:6px solid transparent;border-right:6px solid transparent;border-top:6.5px solid #adadad"></i>
</div>
<div class="abs t" style="left:20px;top:229px;line-height:20px;font-size:17.7px;">Turntable or Linear track</div>
<div class="combo" style="left:21px;top:256px;width:179px;height:25px;">
  <svg class="abs" style="left:5px;top:6px" width="14" height="14"><use href="#i-x" width="14" height="14"/></svg>
  <span class="abs t" style="left:23px;top:0;line-height:26px;font-size:17.4px">None</span>
  <i class="abs" style="left:158px;top:10px;border-left:6px solid transparent;border-right:6px solid transparent;border-top:6.5px solid #adadad"></i>
</div>
<div class="abs t" style="left:11px;top:672px;line-height:20px;font-size:17.75px;">UR5 is synchronized with: Lin Mechanism (id 7-7)</div>
<div class="btn" style="left:11px;top:726px;width:168px;border-color:#5d8fd6;box-shadow:0 0 0 1px #1d3a63;font-size:17.7px"><span class="tc">Optimization Settings</span></div>
<div class="btn" style="left:188px;top:726px;width:106px;font-size:16.85px"><span class="tc">Remove Sync</span></div>
<div class="btn" style="left:596px;top:726px;width:76px;font-size:17.6px"><span class="tc">OK</span></div>
<div class="btn" style="left:682px;top:726px;width:76px;font-size:16.75px"><span class="tc">Cancel</span></div>

</div>
<div id="menu">
<div class="it" style="top:0"><svg class="abs" style="left:11px;top:8px" width="14" height="14"><use href="#i-x" width="14" height="14"/></svg><span class="t">None</span></div>
<div class="it" style="top:29px;background:#2a80d9;color:#0c0c0c;height:29px"><svg class="abs" style="left:10px;top:6px" width="17" height="17"><use href="#i-gears" width="17" height="17"/></svg><span class="t">Rot Mechanism</span></div>
<div class="it" style="top:58px"><svg class="abs" style="left:10px;top:6px" width="17" height="17"><use href="#i-gears" width="17" height="17"/></svg><svg class="abs" style="left:9px;top:16px" width="8" height="8"><use href="#i-link" width="8" height="8"/></svg><span class="t">Lin Mechanism</span></div>

</div>
</body>
</html>
